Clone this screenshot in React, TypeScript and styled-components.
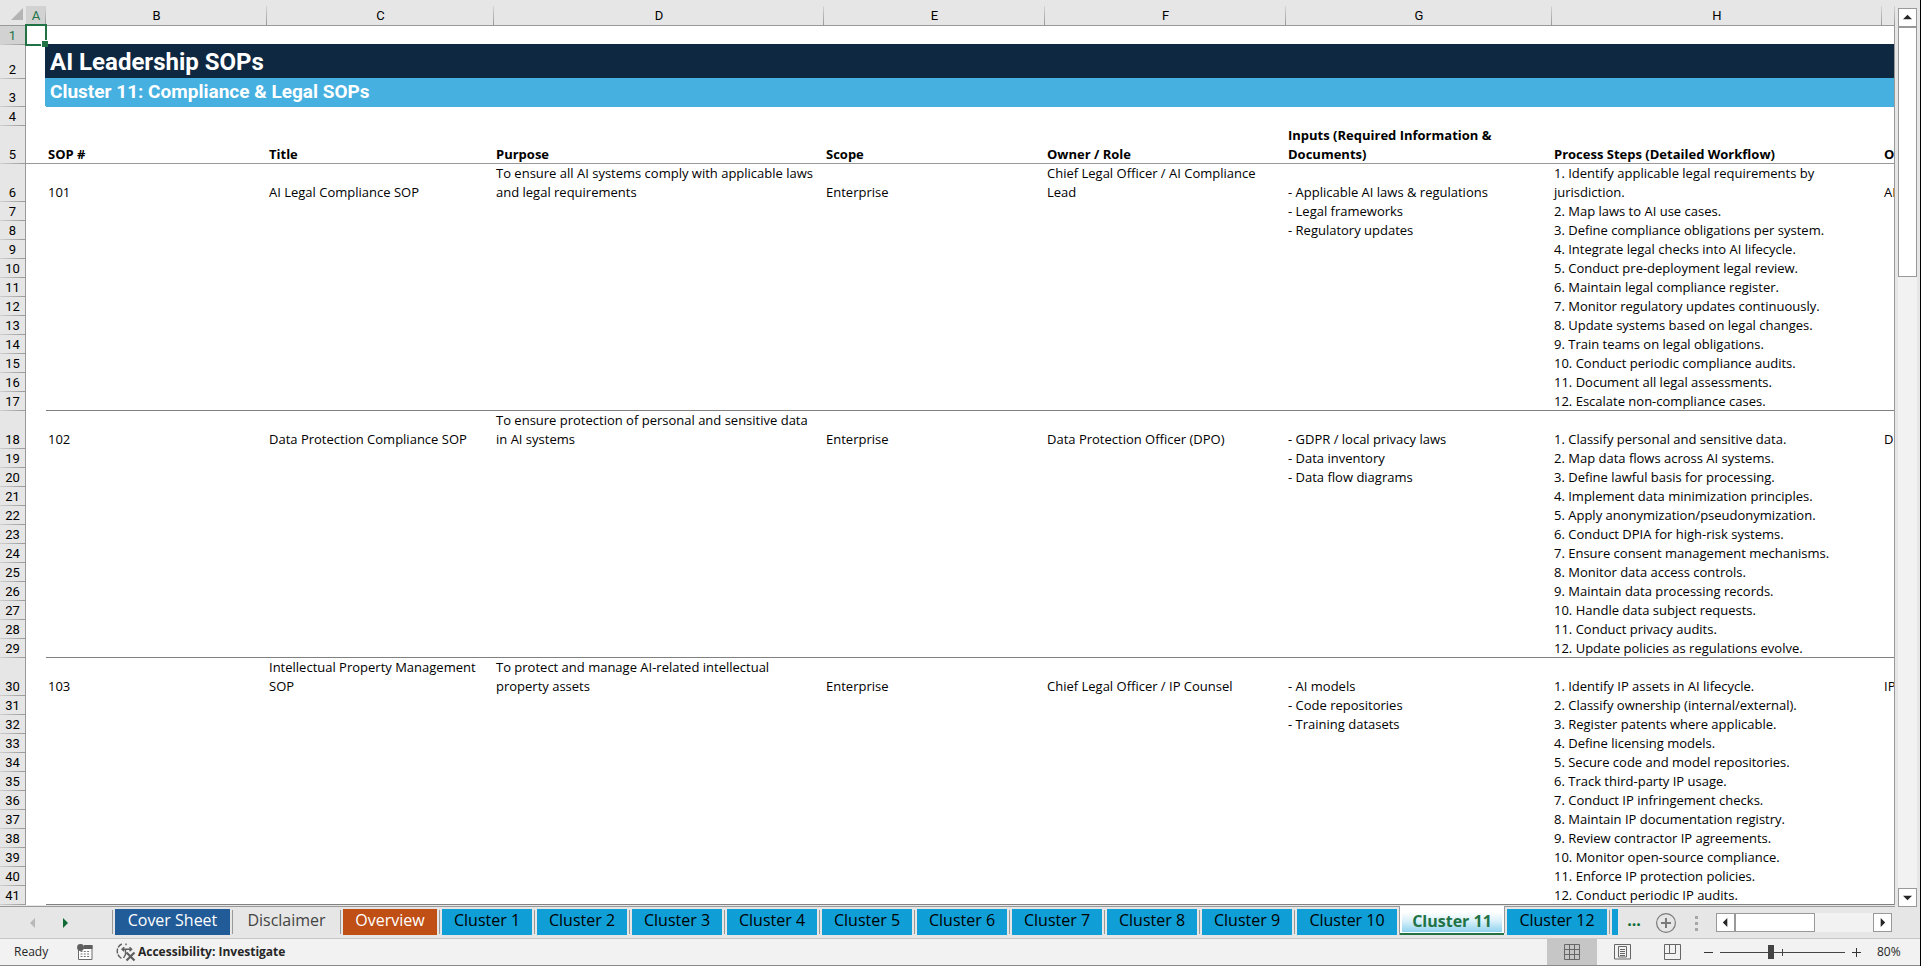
import React, { Fragment, useState } from "react";
import styled, { createGlobalStyle, css } from "styled-components";

const Global = createGlobalStyle`
  * { box-sizing: border-box; }
  body { margin: 0; background: #e6e6e6; }
  button { border: 0; padding: 0; background: none; color: inherit; font: inherit; cursor: pointer; }
`;

const headFont = `Roboto, "Liberation Sans", sans-serif`;
const uiFont = `"Open Sans", "Noto Sans", sans-serif`;
const line = "#999999";
const green = "#217346";

const Page = styled.div`
  display: flex;
  flex-direction: column;
  height: 100vh;
  overflow: hidden;
  background: #e6e6e6;
  border-right: 1px solid #000;
  font-family: ${uiFont};
`;

/* ---------- worksheet ---------- */

const Main = styled.main`
  display: flex;
  flex: 1;
  min-height: 0;
`;

const GridArea = styled.div`
  flex: 1;
  min-width: 0;
  overflow: hidden;
  border-bottom: 1px solid ${line};
`;

const Grid = styled.table`
  width: 100%;
  table-layout: fixed;
  border-collapse: separate;
  border-spacing: 0;
  font-size: 13px;
  line-height: 19px;
  color: #000;
`;

const Col = styled.col<{ $w?: number }>`
  width: ${(p) => (p.$w ? `${p.$w}px` : "auto")};
`;

const Corner = styled.th`
  padding: 6px 3px 3px 10px;
  border-bottom: 1px solid ${line};
  background: #e6e6e6;
  line-height: 0;
`;

const ColHead = styled.th<{ $on?: boolean }>`
  height: 26px;
  padding: 6px 0 0;
  border-bottom: 1px solid ${line};
  background:
    linear-gradient(#d4d4d4, ${line}) right bottom / 1px 19px no-repeat,
    linear-gradient(${(p) => (p.$on ? "#d2d2d2, #d2d2d2" : "#e6e6e6, #e6e6e6")}) bottom / 100% 19px no-repeat,
    #e6e6e6;
  color: ${(p) => (p.$on ? green : "#000")};
  font-weight: 400;
  font-family: ${headFont};
`;

const Row = styled.tr<{ $h: number }>`
  height: ${(p) => p.$h}px;
`;

const RowHead = styled.th<{ $on?: boolean }>`
  padding: 0;
  border-right: 1px solid ${line};
  background:
    linear-gradient(to right, #cfcfcf, ${line}) bottom / 100% 1px no-repeat,
    ${(p) => (p.$on ? "#d2d2d2" : "#e6e6e6")};
  color: ${(p) => (p.$on ? green : "#000")};
  font-weight: 400;
  font-family: ${headFont};
  vertical-align: bottom;
`;

const Cell = styled.td<{ $bold?: boolean; $rule?: string }>`
  overflow: hidden;
  padding: 0 2px;
  background: #fff;
  white-space: nowrap;
  vertical-align: bottom;
  font-weight: ${(p) => (p.$bold ? 700 : 400)};
  ${(p) => p.$rule && css`box-shadow: inset 0 -1px 0 ${p.$rule};`}

  &:last-child {
    padding-right: 0;
    border-right: 1px solid ${line};
  }
`;

const SelectedCell = styled(Cell)`
  position: relative;
  overflow: visible;

  &::before {
    content: "";
    position: absolute;
    z-index: 1;
    inset: -2px -1px -1px -1px;
    border: 2px solid ${green};
  }

  &::after {
    content: "";
    position: absolute;
    z-index: 2;
    right: -2px;
    bottom: -2px;
    width: 6px;
    height: 6px;
    border: solid #fff;
    border-width: 1px 0 0 1px;
    background: ${green};
  }
`;

const Banner = styled.td<{ $sub?: boolean }>`
  padding: 0 4px;
  border-right: 1px solid ${line};
  background: ${(p) => (p.$sub ? "#46b1e1" : "#0e2841")};
  box-shadow: -1px -1px 0 ${(p) => (p.$sub ? "#46b1e1" : "#0e2841")};
  color: #fff;
  font-family: ${headFont};
  font-weight: 700;
  font-size: ${(p) => (p.$sub ? 19 : 24)}px;
  line-height: ${(p) => (p.$sub ? 26 : 34)}px;
  vertical-align: top;
`;

/* ---------- scroll bars ---------- */

const ScrollColumn = styled.div`
  display: flex;
  flex-direction: column;
  width: 25px;
  padding: 8px 3px 0;
`;

const ScrollButton = styled.button`
  display: grid;
  place-items: center;
  flex: none;
  width: 19px;
  height: 19px;
  border: 1px solid ${line};
  background: #fff;
`;

const Track = styled.div<{ $across?: boolean }>`
  flex: 1;
  display: flex;
  flex-direction: ${(p) => (p.$across ? "row" : "column")};
  background: #f2f2f2;
`;

const Thumb = styled.div<{ $across?: boolean }>`
  ${(p) => (p.$across ? "width: 80px;" : "height: 250px;")}
  border: 1px solid ${line};
  background: #fff;
`;

const ScrollRow = styled.div`
  display: flex;
  width: 176px;
  height: 19px;
  margin: 6px 28px 0 auto;
`;

/* ---------- sheet tabs ---------- */

const TabBar = styled.nav`
  display: flex;
  flex: none;
  height: 32px;
  border-bottom: 1px solid #c6c6c6;
`;

const SheetNav = styled.div`
  display: flex;
  align-items: center;
  gap: 16px;
  width: 112px;
  padding-left: 25px;
`;

const NavButton = styled.button`
  display: grid;
  place-items: center;
  width: 16px;
  height: 16px;
`;

const Tabs = styled.ul`
  display: flex;
  margin: 0;
  padding: 0;
  list-style: none;
`;

const tones = {
  navy: { bg: "#215c98", fg: "#fff" },
  plain: { bg: "transparent", fg: "#444" },
  orange: { bg: "#c04f15", fg: "#fff" },
  blue: { bg: "#0f9ed5", fg: "#000" },
};
type Tone = keyof typeof tones;

const TabItem = styled.li<{ $bare?: boolean }>`
  display: flex;
  gap: 2px;
  height: 28px;
  padding: 2px 2px 0 0;

  &::before {
    content: "";
    width: 1px;
    height: ${(p) => (p.$bare ? 26 : 24)}px;
    margin-top: ${(p) => (p.$bare ? -2 : 1)}px;
    background: ${line};
  }
`;

const Tab = styled.button<{ $tone: Tone; $w: number }>`
  display: block;
  width: ${(p) => p.$w}px;
  height: 26px;
  padding-bottom: 4px;
  background: ${(p) => tones[p.$tone].bg};
  color: ${(p) => tones[p.$tone].fg};
  font-size: 16px;
  line-height: 22px;
  overflow: hidden;
`;

const ActiveItem = styled.li`
  height: 29px;
  margin-top: -1px;
  padding: 4px 2px 2px;
  border: solid ${line};
  border-width: 0 0 0 1px;
  background: #fff;
  box-shadow: inset 0 -2px 0 ${green};
`;

const ActiveTab = styled.button<{ $w: number }>`
  display: block;
  width: ${(p) => p.$w}px;
  height: 22px;
  background: linear-gradient(#fff 10%, #d9f0fa 50%, #8fd2ee);
  color: ${green};
  font-weight: 700;
  font-size: 16px;
  line-height: 20px;
`;

const More = styled.button`
  margin-left: 5px;
  width: 18px;
  height: 26px;
  color: #0f6b35;
  font-weight: 700;
  font-size: 16px;
  line-height: 26px;
`;

const AddSheet = styled.button`
  display: block;
  height: 22px;
  margin: 5px 0 0 12px;
`;

const Grip = styled.div`
  display: grid;
  gap: 3px;
  align-content: start;
  margin: 9px 0 0 18px;

  i {
    width: 3px;
    height: 3px;
    background: #a6a6a6;
  }
`;

/* ---------- status bar ---------- */

const StatusBar = styled.footer`
  display: flex;
  flex: none;
  align-items: stretch;
  height: 27px;
  border-bottom: 1px solid #8a8a8a;
  background: #f2f2f2;
  color: #262626;
  font-size: 12px;
  line-height: 26px;
`;

const Ready = styled.span`
  width: 77px;
  padding-left: 14px;
`;

const StatusButton = styled.button<{ $w?: number; $on?: boolean }>`
  display: flex;
  align-items: center;
  justify-content: center;
  gap: 2px;
  ${(p) => p.$w && `width: ${p.$w}px;`}
  background: ${(p) => (p.$on ? "#c6c6c6" : "none")};
`;

const Accessibility = styled(StatusButton)`
  margin-left: 23px;
  font-weight: 700;
`;

const ViewTools = styled.div`
  display: flex;
  margin-left: auto;
`;

const Zoom = styled.input`
  appearance: none;
  width: 125px;
  height: 26px;
  margin: 0;
  background:
    linear-gradient(#444, #444) center / 1px 7px no-repeat,
    linear-gradient(#444, #444) center / 100% 1px no-repeat;

  &::-webkit-slider-thumb {
    appearance: none;
    width: 6px;
    height: 14px;
    background: #444;
  }
`;

const Percent = styled.button`
  width: 53px;
  padding-left: 10px;
  text-align: left;
`;

/* ---------- drawings ---------- */

const Arrow = ({ dir, fill = "#262626", big }: { dir: "up" | "down" | "left" | "right"; fill?: string; big?: boolean }) => {
  const d = {
    up: "M0 7h10L5 2z",
    down: "M0 3h10L5 8z",
    left: "M7 0v10L2 5z",
    right: "M3 0v10l5-5z",
  }[dir];
  return (
    <svg width={big ? 10 : 9} height={big ? 10 : 9} viewBox="0 0 10 10" aria-hidden="true">
      <path d={d} fill={fill} />
    </svg>
  );
};

const AddIcon = () => (
  <svg width="22" height="22" viewBox="0 0 22 22" fill="none" stroke="#7a7a7a" aria-hidden="true">
    <circle cx="11" cy="11" r="9.4" strokeWidth="1.2" />
    <path d="M11 6v10M6 11h10" strokeWidth="2" />
  </svg>
);

const MacroIcon = () => (
  <svg width="16" height="16" viewBox="0 0 16 16" aria-hidden="true">
    <path d="M1.5 6v9.500h13.500V1.500H7" fill="#fff" stroke="#6a6a6a" />
    <path d="M7 1h8.500v4H6z" fill="#5f5f5f" />
    <circle cx="3.500" cy="3.500" r="3.400" fill="#5f5f5f" />
    <path d="M3.500 7.500h10M3.500 10h10M3.500 12.500h10" stroke="#777" strokeDasharray="2 1.300" />
  </svg>
);

const AccessIcon = () => (
  <svg width="20" height="20" viewBox="0 0 20 20" fill="none" stroke="#5f5f5f" aria-hidden="true">
    <path d="M5.800 2A8 8 0 0 0 5.500 16.300" strokeWidth="1.400" strokeDasharray="5 1.200" />
    <path d="M6 7.300h9.500M8.200 5.300L6 7.300l2.200 2M13.500 5.300l2.200 2-2.200 2M10 1.500v1.800M9.500 8v4.500l-2 3.500" strokeWidth="1.400" />
    <path d="M10.500 10.500l8 8M18.500 10.500l-8 8" strokeWidth="2.200" />
  </svg>
);

const NormalIcon = () => (
  <svg width="16" height="16" viewBox="0 0 16 16" fill="none" stroke="#666" aria-hidden="true">
    <path d="M.5.5h15v15H.5zM5.500.5v15M10.500.5v15M.5 5.500h15M.5 10.500h15" />
  </svg>
);

const PageLayoutIcon = () => (
  <svg width="17" height="16" viewBox="0 0 17 16" fill="none" stroke="#666" aria-hidden="true">
    <path d="M.5.5h16v14.500H.5zM4.500 2.500h8v10.500h-8zM6 5.500h5M6 7.500h5M6 9.500h5M6 11.500h5" />
  </svg>
);

const PageBreakIcon = () => (
  <svg width="17" height="16" viewBox="0 0 17 16" fill="none" stroke="#666" aria-hidden="true">
    <path d="M.5.5h16v15H.5zM5.500.5v9M11.500.5v9M.5 9.500h11" />
  </svg>
);

const Sign = ({ plus }: { plus?: boolean }) => (
  <svg width="11" height="11" viewBox="0 0 11 11" stroke="#333" aria-hidden="true">
    <path d={plus ? "M1 5.500h9M5.500 1v9" : "M1 5.500h9"} />
  </svg>
);

/* ---------- data ---------- */

const columns = [
  { name: "A", w: 20 },
  { name: "B", w: 221 },
  { name: "C", w: 227 },
  { name: "D", w: 330 },
  { name: "E", w: 221 },
  { name: "F", w: 241 },
  { name: "G", w: 266 },
  { name: "H", w: 330 },
];

type Lines = string[];
type Sop = { first: number; cells: Lines[]; inputs: string[]; steps: string[] };

const headings: Lines[] = [
  ["SOP #"],
  ["Title"],
  ["Purpose"],
  ["Scope"],
  ["Owner / Role"],
  ["Inputs (Required Information &", "Documents)"],
  ["Process Steps (Detailed Workflow)"],
  ["O"],
];

const sops: Sop[] = [
  {
    first: 6,
    cells: [
      ["101"],
      ["AI Legal Compliance SOP"],
      ["To ensure all AI systems comply with applicable laws", "and legal requirements"],
      ["Enterprise"],
      ["Chief Legal Officer / AI Compliance", "Lead"],
      ["- Applicable AI laws & regulations"],
      ["1. Identify applicable legal requirements by", "jurisdiction."],
      ["AI"],
    ],
    inputs: ["- Legal frameworks", "- Regulatory updates"],
    steps: [
      "2. Map laws to AI use cases.",
      "3. Define compliance obligations per system.",
      "4. Integrate legal checks into AI lifecycle.",
      "5. Conduct pre-deployment legal review.",
      "6. Maintain legal compliance register.",
      "7. Monitor regulatory updates continuously.",
      "8. Update systems based on legal changes.",
      "9. Train teams on legal obligations.",
      "10. Conduct periodic compliance audits.",
      "11. Document all legal assessments.",
      "12. Escalate non-compliance cases.",
    ],
  },
  {
    first: 18,
    cells: [
      ["102"],
      ["Data Protection Compliance SOP"],
      ["To ensure protection of personal and sensitive data", "in AI systems"],
      ["Enterprise"],
      ["Data Protection Officer (DPO)"],
      ["- GDPR / local privacy laws"],
      ["1. Classify personal and sensitive data."],
      ["D"],
    ],
    inputs: ["- Data inventory", "- Data flow diagrams"],
    steps: [
      "2. Map data flows across AI systems.",
      "3. Define lawful basis for processing.",
      "4. Implement data minimization principles.",
      "5. Apply anonymization/pseudonymization.",
      "6. Conduct DPIA for high-risk systems.",
      "7. Ensure consent management mechanisms.",
      "8. Monitor data access controls.",
      "9. Maintain data processing records.",
      "10. Handle data subject requests.",
      "11. Conduct privacy audits.",
      "12. Update policies as regulations evolve.",
    ],
  },
  {
    first: 30,
    cells: [
      ["103"],
      ["Intellectual Property Management", "SOP"],
      ["To protect and manage AI-related intellectual", "property assets"],
      ["Enterprise"],
      ["Chief Legal Officer / IP Counsel"],
      ["- AI models"],
      ["1. Identify IP assets in AI lifecycle."],
      ["IP"],
    ],
    inputs: ["- Code repositories", "- Training datasets"],
    steps: [
      "2. Classify ownership (internal/external).",
      "3. Register patents where applicable.",
      "4. Define licensing models.",
      "5. Secure code and model repositories.",
      "6. Track third-party IP usage.",
      "7. Conduct IP infringement checks.",
      "8. Maintain IP documentation registry.",
      "9. Review contractor IP agreements.",
      "10. Monitor open-source compliance.",
      "11. Enforce IP protection policies.",
      "12. Conduct periodic IP audits.",
    ],
  },
];

const tabs: { name: string; tone: Tone; w: number }[] = [
  { name: "Cover Sheet", tone: "navy", w: 115 },
  { name: "Disclaimer", tone: "plain", w: 103 },
  { name: "Overview", tone: "orange", w: 94 },
  ...[1, 2, 3, 4, 5, 6, 7, 8, 9].map((n) => ({ name: `Cluster ${n}`, tone: "blue" as Tone, w: 90 })),
  { name: "Cluster 10", tone: "blue", w: 100 },
  { name: "Cluster 11", tone: "blue", w: 100 },
  { name: "Cluster 12", tone: "blue", w: 100 },
];

const Text = ({ lines }: { lines: Lines }) => (
  <>
    {lines.map((l, i) => (
      <Fragment key={i}>
        {i > 0 && <br />}
        {l}
      </Fragment>
    ))}
  </>
);

const EmptyCells = ({ count }: { count: number }) => (
  <>
    {Array.from({ length: count }, (_, i) => (
      <Cell key={i} />
    ))}
  </>
);

const SopRows = ({ sop }: { sop: Sop }) => (
  <>
    <Row $h={38}>
      <RowHead scope="row">{sop.first}</RowHead>
      <Cell />
      {sop.cells.map((c, i) => (
        <Cell key={i}>
          <Text lines={c} />
        </Cell>
      ))}
    </Row>
    {sop.steps.map((step, i) => {
      const rule = i === sop.steps.length - 1 ? "#808080" : undefined;
      return (
        <Row $h={19} key={step}>
          <RowHead scope="row">{sop.first + 1 + i}</RowHead>
          <Cell />
          {[0, 1, 2, 3, 4].map((n) => (
            <Cell key={n} $rule={rule} />
          ))}
          <Cell $rule={rule}>{sop.inputs[i]}</Cell>
          <Cell $rule={rule}>{step}</Cell>
          <Cell $rule={rule} />
        </Row>
      );
    })}
  </>
);

export default function App() {
  const [zoom, setZoom] = useState(80);
  return (
    <Page>
      <Global />
      <Main>
        <GridArea>
          <Grid>
            <colgroup>
              <Col $w={26} />
              {columns.map((c) => (
                <Col key={c.name} $w={c.w} />
              ))}
              <Col />
            </colgroup>
            <thead>
              <tr>
                <Corner>
                  <svg width="12" height="12" viewBox="0 0 12 12" aria-hidden="true">
                    <path d="M12 0v12H0z" fill="#b4b4b4" />
                  </svg>
                </Corner>
                {columns.map((c, i) => (
                  <ColHead key={c.name} scope="col" $on={i === 0}>
                    {c.name}
                  </ColHead>
                ))}
                <ColHead />
              </tr>
            </thead>
            <tbody>
              <Row $h={19}>
                <RowHead scope="row" $on>1</RowHead>
                <SelectedCell />
                <EmptyCells count={8} />
              </Row>
              <Row $h={34}>
                <RowHead scope="row">2</RowHead>
                <Cell />
                <Banner colSpan={8}>AI Leadership SOPs</Banner>
              </Row>
              <Row $h={28}>
                <RowHead scope="row">3</RowHead>
                <Cell />
                <Banner colSpan={8} $sub>Cluster 11: Compliance &amp; Legal SOPs</Banner>
              </Row>
              <Row $h={19}>
                <RowHead scope="row">4</RowHead>
                <EmptyCells count={9} />
              </Row>
              <Row $h={38}>
                <RowHead scope="row">5</RowHead>
                <Cell $rule={line} />
                {headings.map((h, i) => (
                  <Cell key={i} $bold $rule={line}>
                    <Text lines={h} />
                  </Cell>
                ))}
              </Row>
              {sops.map((s) => (
                <SopRows key={s.first} sop={s} />
              ))}
            </tbody>
          </Grid>
        </GridArea>
        <ScrollColumn>
          <ScrollButton aria-label="Scroll up"><Arrow dir="up" /></ScrollButton>
          <Track><Thumb /></Track>
          <ScrollButton aria-label="Scroll down"><Arrow dir="down" /></ScrollButton>
        </ScrollColumn>
      </Main>

      <TabBar aria-label="Sheets">
        <SheetNav>
          <NavButton aria-label="Previous sheets"><Arrow dir="left" fill="#b8b8b8" big /></NavButton>
          <NavButton aria-label="Next sheets"><Arrow dir="right" fill="#0f6b35" big /></NavButton>
        </SheetNav>
        <Tabs>
          {tabs.map((t) =>
            t.name === "Cluster 11" ? (
              <ActiveItem key={t.name}>
                <ActiveTab $w={t.w} aria-current="page">{t.name}</ActiveTab>
              </ActiveItem>
            ) : (
              <TabItem key={t.name} $bare={t.name === "Cluster 12"}>
                <Tab $tone={t.tone} $w={t.w}>{t.name}</Tab>
              </TabItem>
            )
          )}
          <TabItem>
            <Tab $tone="blue" $w={6} aria-label="Next cluster" />
          </TabItem>
        </Tabs>
        <More aria-label="More sheets">...</More>
        <AddSheet aria-label="New sheet"><AddIcon /></AddSheet>
        <Grip><i /><i /><i /></Grip>
        <ScrollRow>
          <ScrollButton aria-label="Scroll left"><Arrow dir="left" /></ScrollButton>
          <Track $across><Thumb $across /></Track>
          <ScrollButton aria-label="Scroll right"><Arrow dir="right" /></ScrollButton>
        </ScrollRow>
      </TabBar>

      <StatusBar>
        <Ready>Ready</Ready>
        <StatusButton $w={16} aria-label="Record macro"><MacroIcon /></StatusButton>
        <Accessibility><AccessIcon />Accessibility: Investigate</Accessibility>
        <ViewTools>
          <StatusButton $w={50} $on aria-label="Normal view"><NormalIcon /></StatusButton>
          <StatusButton $w={50} aria-label="Page layout view"><PageLayoutIcon /></StatusButton>
          <StatusButton $w={50} aria-label="Page break preview"><PageBreakIcon /></StatusButton>
          <StatusButton $w={23} aria-label="Zoom out"><Sign /></StatusButton>
          <Zoom
            type="range"
            aria-label="Zoom"
            min={0}
            max={200}
            value={zoom}
            onChange={(e) => setZoom(Number(e.target.value))}
          />
          <StatusButton $w={22} aria-label="Zoom in"><Sign plus /></StatusButton>
          <Percent>{zoom}%</Percent>
        </ViewTools>
      </StatusBar>
    </Page>
  );
}
